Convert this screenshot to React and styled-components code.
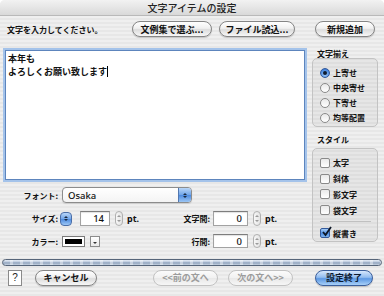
import React from "react";
import styled, { createGlobalStyle, css } from "styled-components";

const GlobalStyle = createGlobalStyle`
  html, body {
    margin: 0;
    padding: 0;
    width: 384px;
    height: 296px;
    overflow: hidden;
  }
  body {
    font-family: "Noto Sans CJK JP", "Liberation Sans", sans-serif;
    color: #111;
  }
`;

const Window = styled.div`
  width: 384px;
  height: 296px;
  display: flex;
  flex-direction: column;
  background: repeating-linear-gradient(180deg, #efefef 0 2px, #e7e7e7 2px 4px);
  border-radius: 5px 5px 0 0;
  overflow: hidden;
`;

const TitleBar = styled.div`
  height: 16px;
  flex: none;
  display: flex;
  align-items: center;
  justify-content: center;
  background: linear-gradient(#f2f2f2, #d9d9d9);
  border-bottom: 1px solid #b9b9b9;
  box-sizing: border-box;
  font-size: 10px;
  font-weight: 500;
  color: #222;
`;

const Body = styled.div`
  padding: 0 6px 0 5px;
`;

const TopRow = styled.div`
  margin-top: 5px;
  height: 16px;
  display: flex;
  align-items: center;
`;

const Label = styled.span`
  font-size: 8px;
  font-weight: 700;
  white-space: nowrap;
  width: ${(p) => (p.$w ? p.$w + "px" : "auto")};
  text-align: ${(p) => (p.$right ? "right" : "left")};
  padding-left: ${(p) => p.$pl || 0}px;
  box-sizing: border-box;
`;

const Button = styled.button`
  all: unset;
  box-sizing: border-box;
  width: ${(p) => p.$w}px;
  height: 16px;
  margin-left: ${(p) => p.$ml || 0}px;
  border-radius: 8px;
  border: 1px solid #858585;
  background: linear-gradient(#ffffff, #f0f0f0 45%, #dcdcdc 55%, #f7f7f7);
  box-shadow: 0 1px 1px rgba(0, 0, 0, 0.18);
  display: flex;
  align-items: center;
  justify-content: center;
  font-size: 9px;
  font-weight: 700;
  color: #111;
  white-space: nowrap;

  ${(p) =>
    p.$disabled &&
    css`
      border-color: #c2c2c2;
      color: #9c9c9c;
      background: linear-gradient(#fbfbfb, #f1f1f1 50%, #e8e8e8 51%, #f6f6f6);
      box-shadow: none;
    `}

  ${(p) =>
    p.$primary &&
    css`
      border-color: #3b5f9c;
      color: #0c1a30;
      background: linear-gradient(#d6e7fc, #93bdf0 45%, #5c98e3 55%, #a8d0f8);
    `}
`;

const HelpButton = styled.div`
  width: 14px;
  height: 16px;
  box-sizing: border-box;
  margin-left: 6px;
  border: 1px solid #8a8a8a;
  background: #fff;
  display: flex;
  align-items: center;
  justify-content: center;
  font-family: "Liberation Sans", sans-serif;
  font-size: 10px;
  color: #222;
`;

const Main = styled.div`
  margin-top: 13px;
  display: grid;
  grid-template-columns: 300px 66px;
  column-gap: 7px;
`;

const Editor = styled.div`
  height: 130px;
  box-sizing: border-box;
  background: #fff;
  border: 1px solid #5d85bd;
  box-shadow: 0 0 0 2px #a4c3ea;
  padding: 1px 2px;
  font-size: 9px;
  font-weight: 700;
  line-height: 13px;
  color: #111;
`;

const Caret = styled.span`
  display: inline-block;
  width: 1px;
  height: 11px;
  background: #000;
  vertical-align: -2px;
`;

const Controls = styled.div`
  margin-top: 7px;
  display: flex;
  flex-direction: column;
`;

const ControlRow = styled.div`
  display: grid;
  grid-template-columns: 53px 92px 60px auto;
  align-items: center;
  height: ${(p) => p.$h}px;
  margin-top: ${(p) => p.$mt || 0}px;
`;

const Cell = styled.div`
  display: flex;
  align-items: center;
  grid-column: ${(p) => p.$span || "auto"};
`;

const Popup = styled.div`
  width: 130px;
  height: 16px;
  margin-left: 4px;
  box-sizing: border-box;
  border: 1px solid #8c8c8c;
  border-radius: 4px;
  background: linear-gradient(#ffffff, #f4f4f4);
  display: flex;
  align-items: center;
  overflow: hidden;
  box-shadow: 0 1px 1px rgba(0, 0, 0, 0.12);
`;

const PopupText = styled.span`
  flex: 1;
  padding-left: 5px;
  font-family: "Noto Sans", "Liberation Sans", sans-serif;
  font-size: 9.5px;
  font-weight: 500;
`;

const BlueCap = styled.div`
  width: ${(p) => p.$w || 13}px;
  height: 100%;
  box-sizing: border-box;
  background: linear-gradient(#b9d6f8, #6fa4e8 50%, #4c8ae0 51%, #9cc6f4);
  border-left: 1px solid #5277b0;
  display: flex;
  flex-direction: column;
  align-items: center;
  justify-content: center;
  gap: 1px;
`;

const BlueStepper = styled(BlueCap)`
  height: 14px;
  margin-left: 2px;
  border: 1px solid #4a6ea8;
  border-radius: 4px;
`;

const Arrow = styled.span`
  width: 0;
  height: 0;
  border-left: 2px solid transparent;
  border-right: 2px solid transparent;
  ${(p) =>
    p.$down
      ? css`border-top: 2px solid ${p.$color || "#1a2a40"};`
      : css`border-bottom: 2px solid ${p.$color || "#1a2a40"};`}
`;

const Field = styled.div`
  width: ${(p) => p.$w}px;
  height: ${(p) => p.$h || 15}px;
  margin-left: ${(p) => p.$ml || 0}px;
  box-sizing: border-box;
  background: #fff;
  border: 1px solid #a2a2a2;
  border-top-color: #7d7d7d;
  box-shadow: inset 0 1px 1px rgba(0, 0, 0, 0.12);
  display: flex;
  align-items: center;
  justify-content: flex-end;
  padding-right: 5px;
  font-family: "Noto Sans", "Liberation Sans", sans-serif;
  font-size: 9.5px;
  font-weight: 500;
`;

const Stepper = styled.div`
  width: 8px;
  height: ${(p) => p.$h || 15}px;
  margin-left: 5px;
  box-sizing: border-box;
  border: 1px solid #b0b0b0;
  border-radius: 4px;
  background: linear-gradient(90deg, #f7f7f7, #e3e3e3);
  display: flex;
  flex-direction: column;
  align-items: center;
  justify-content: center;
  gap: 3px;
`;

const Unit = styled.span`
  margin-left: 4px;
  font-family: "Noto Sans", "Liberation Sans", sans-serif;
  font-size: 9px;
  font-weight: 700;
`;

const ColorWell = styled.div`
  width: 23px;
  height: 11px;
  margin-left: 4px;
  box-sizing: border-box;
  border: 1px solid #7a7a7a;
  background: #fff;
  padding: 2px;
  display: flex;
`;

const Swatch = styled.div`
  flex: 1;
  background: #000;
`;

const SmallMenu = styled.div`
  width: 10px;
  height: 11px;
  margin-left: 5px;
  box-sizing: border-box;
  border: 1px solid #8c8c8c;
  background: linear-gradient(#fff, #e9e9e9);
  display: flex;
  align-items: flex-end;
  justify-content: center;
  padding-bottom: 2px;
`;

const Side = styled.div`
  display: flex;
  flex-direction: column;
`;

const Caption = styled.div`
  height: 8px;
  line-height: 8px;
  margin-top: ${(p) => p.$mt || 0}px;
  margin-bottom: ${(p) => p.$mb || 0}px;
  padding-left: 5px;
  font-size: 8px;
  font-weight: 700;
  white-space: nowrap;
`;

const GroupBox = styled.div`
  box-sizing: border-box;
  height: ${(p) => p.$h}px;
  border: 1px solid #c3c3c3;
  border-radius: 5px;
  background: rgba(0, 0, 0, 0.035);
  padding: 6px 0 0 7px;
  display: flex;
  flex-direction: column;
`;

const Option = styled.div`
  height: ${(p) => p.$h}px;
  display: flex;
  align-items: center;
  gap: 3px;
  font-size: 8px;
  font-weight: 700;
  white-space: nowrap;
`;

const Radio = styled.span`
  width: 10px;
  height: 10px;
  box-sizing: border-box;
  border-radius: 50%;
  border: 1px solid #8a8a8a;
  background: linear-gradient(#e9e9e9, #ffffff);
  display: flex;
  align-items: center;
  justify-content: center;

  ${(p) =>
    p.$on &&
    css`
      border-color: #33599a;
      background: radial-gradient(circle at 50% 70%, #a6cdf7, #4f8ee3 60%, #2f69c2);
      &::after {
        content: "";
        width: 4px;
        height: 4px;
        border-radius: 50%;
        background: #0d1a2e;
      }
    `}
`;

const Check = styled.span`
  width: 10px;
  height: 10px;
  box-sizing: border-box;
  border: 1px solid #8a8a8a;
  border-radius: 2px;
  background: linear-gradient(#e9e9e9, #ffffff);
  position: relative;

  ${(p) =>
    p.$on &&
    css`
      border-color: #33599a;
      background: linear-gradient(#a6cdf7, #4f8ee3 55%, #7db4f0);
    `}
`;

const CheckMark = styled.svg`
  position: absolute;
  left: 0;
  top: -3px;
  width: 11px;
  height: 11px;
`;

const Divider = styled.div`
  height: 1px;
  margin: 3px 6px 3px 0;
  background: #c0c0c0;
`;

const Footer = styled.div`
  margin-top: auto;
  padding: 0 2px;
`;

const ProgressBar = styled.div`
  height: 7px;
  box-sizing: border-box;
  border: 1px solid #566579;
  border-radius: 4px;
  background: repeating-linear-gradient(90deg, rgba(255, 255, 255, 0) 0 7px, rgba(255, 255, 255, 0.4) 7px 10px),
    linear-gradient(#e6edf6, #b5c4d8 45%, #8c9fb9 55%, #c8d4e4);
`;

const ButtonRow = styled.div`
  margin: 3px 0 10px;
  height: 17px;
  display: flex;
  align-items: center;
`;

const Choice = ({ h, children, control }) => (
  <Option $h={h}>
    {control}
    {children}
  </Option>
);

const CheckBox = ({ on }) => (
  <Check $on={on}>
    {on && (
      <CheckMark viewBox="0 0 11 11">
        <path d="M2 6 L4.5 9 L10 1" fill="none" stroke="#0c1626" strokeWidth="1.8" />
      </CheckMark>
    )}
  </Check>
);

export default function App() {
  return (
    <>
      <GlobalStyle />
      <Window>
        <TitleBar>文字アイテムの設定</TitleBar>
        <Body>
          <TopRow>
            <Label $w={127} $pl={2}>文字を入力してください。</Label>
            <Button $w={80}>文例集で選ぶ...</Button>
            <Button $w={76} $ml={7}>ファイル読込...</Button>
            <Button $w={60} $ml={20}>新規追加</Button>
          </TopRow>

          <Main>
            <div>
              <Editor>
                本年も
                <br />
                よろしくお願い致します
                <Caret />
              </Editor>

              <Controls>
                <ControlRow $h={16}>
                  <Label $right>フォント:</Label>
                  <Cell $span="2 / 4">
                    <Popup>
                      <PopupText>Osaka</PopupText>
                      <BlueCap>
                        <Arrow />
                        <Arrow $down />
                      </BlueCap>
                    </Popup>
                  </Cell>
                </ControlRow>

                <ControlRow $h={15} $mt={8}>
                  <Label $right>サイズ:</Label>
                  <Cell>
                    <BlueStepper $w={12}>
                      <Arrow />
                      <Arrow $down />
                    </BlueStepper>
                    <Field $w={30} $ml={8}>14</Field>
                    <Stepper>
                      <Arrow $color="#9a9a9a" />
                      <Arrow $down $color="#9a9a9a" />
                    </Stepper>
                    <Unit>pt.</Unit>
                  </Cell>
                  <Label $right>文字間:</Label>
                  <Cell>
                    <Field $w={35} $ml={3}>0</Field>
                    <Stepper>
                      <Arrow $color="#9a9a9a" />
                      <Arrow $down $color="#9a9a9a" />
                    </Stepper>
                    <Unit>pt.</Unit>
                  </Cell>
                </ControlRow>

                <ControlRow $h={14} $mt={8}>
                  <Label $right>カラー:</Label>
                  <Cell>
                    <ColorWell>
                      <Swatch />
                    </ColorWell>
                    <SmallMenu>
                      <Arrow $down $color="#333" />
                    </SmallMenu>
                  </Cell>
                  <Label $right>行間:</Label>
                  <Cell>
                    <Field $w={35} $h={14} $ml={3}>0</Field>
                    <Stepper $h={14}>
                      <Arrow $color="#9a9a9a" />
                      <Arrow $down $color="#9a9a9a" />
                    </Stepper>
                    <Unit>pt.</Unit>
                  </Cell>
                </ControlRow>
              </Controls>
            </div>

            <Side>
              <Caption>文字揃え</Caption>
              <GroupBox $h={69}>
                <Choice h={15} control={<Radio $on />}>上寄せ</Choice>
                <Choice h={15} control={<Radio />}>中央寄せ</Choice>
                <Choice h={15} control={<Radio />}>下寄せ</Choice>
                <Choice h={15} control={<Radio />}>均等配置</Choice>
              </GroupBox>

              <Caption $mt={9} $mb={4}>スタイル</Caption>
              <GroupBox $h={94}>
                <Choice h={16} control={<CheckBox />}>太字</Choice>
                <Choice h={16} control={<CheckBox />}>斜体</Choice>
                <Choice h={16} control={<CheckBox />}>影文字</Choice>
                <Choice h={16} control={<CheckBox />}>袋文字</Choice>
                <Divider />
                <Choice h={16} control={<CheckBox on />}>縦書き</Choice>
              </GroupBox>
            </Side>
          </Main>
        </Body>

        <Footer>
          <ProgressBar />
          <ButtonRow>
            <HelpButton>?</HelpButton>
            <Button $w={62} $ml={13}>キャンセル</Button>
            <Button $w={65} $ml={56} $disabled>&lt;&lt;前の文へ</Button>
            <Button $w={65} $ml={10} $disabled>次の文へ&gt;&gt;</Button>
            <Button $w={58} $ml={22} $primary>設定終了</Button>
          </ButtonRow>
        </Footer>
      </Window>
    </>
  );
}
